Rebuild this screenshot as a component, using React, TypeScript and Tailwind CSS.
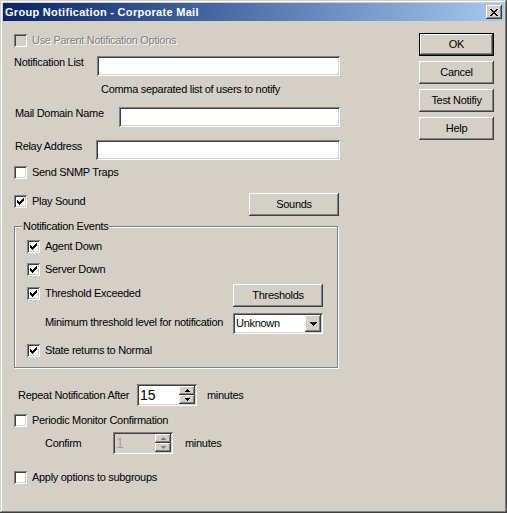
import React from "react";

const raised =
  "shadow-[inset_-1px_-1px_0_#404040,inset_1px_1px_0_#ffffff,inset_-2px_-2px_0_#808080,inset_2px_2px_0_#d4d0c8]";
const sunken =
  "shadow-[inset_1px_1px_0_#808080,inset_-1px_-1px_0_#ffffff,inset_2px_2px_0_#404040,inset_-2px_-2px_0_#d4d0c8]";
const disabledText = "text-[#808080] [text-shadow:1px_1px_0_#ffffff]";

function CheckMark() {
  return (
    <svg width="7" height="7" viewBox="0 0 7 7" shapeRendering="crispEdges">
      <path
        d="M0 2h1v3H0zM1 3h1v3H1zM2 4h1v3H2zM3 3h1v3H3zM4 2h1v3H4zM5 1h1v3H5zM6 0h1v3H6z"
        fill="#000"
      />
    </svg>
  );
}

function CheckBox({ checked, disabled }: { checked?: boolean; disabled?: boolean }) {
  return (
    <div
      className={`w-[13px] h-[13px] shrink-0 flex items-center justify-center ${sunken} ${
        disabled ? "bg-[#d4d0c8]" : "bg-white"
      }`}
    >
      {checked ? <CheckMark /> : null}
    </div>
  );
}

function CheckRow({
  label,
  checked,
  disabled,
  className = "",
}: {
  label: string;
  checked?: boolean;
  disabled?: boolean;
  className?: string;
}) {
  return (
    <div className={`flex items-center h-[13px] gap-[5px] ${className}`}>
      <CheckBox checked={checked} disabled={disabled} />
      <span className={`leading-[13px] whitespace-nowrap ${disabled ? disabledText : ""}`}>{label}</span>
    </div>
  );
}

function Button({
  label,
  isDefault,
  className = "",
}: {
  label: string;
  isDefault?: boolean;
  className?: string;
}) {
  return (
    <div
      className={`h-[23px] flex items-center justify-center bg-[#d4d0c8] leading-[13px] ${raised} ${
        isDefault ? "border border-black" : ""
      } ${className}`}
    >
      {label}
    </div>
  );
}

function TextBox({ className = "" }: { className?: string }) {
  return <div className={`h-[20px] bg-white ${sunken} ${className}`} />;
}

function UpArrow({ color }: { color: string }) {
  return (
    <svg width="5" height="3" viewBox="0 0 5 3" shapeRendering="crispEdges">
      <path d="M2 0h1v1H2zM1 1h3v1H1zM0 2h5v1H0z" fill={color} />
    </svg>
  );
}

function DownArrow({ color }: { color: string }) {
  return (
    <svg width="5" height="3" viewBox="0 0 5 3" shapeRendering="crispEdges">
      <path d="M0 0h5v1H0zM1 1h3v1H1zM2 2h1v1H2z" fill={color} />
    </svg>
  );
}

function Spin({ value, disabled }: { value: string; disabled?: boolean }) {
  const c = disabled ? "#808080" : "#000000";
  return (
    <div
      className={`w-[60px] h-[22px] p-[2px] flex ${sunken} ${disabled ? "bg-[#d4d0c8]" : "bg-white"}`}
    >
      <div
        className={`flex-1 pl-[1px] flex items-center text-[14px] leading-[16px] tracking-normal ${
          disabled ? "text-[#a0a0a0]" : "text-black"
        }`}
      >
        {value}
      </div>
      <div className="w-[16px] flex flex-col">
        <div className={`h-[9px] flex items-center justify-center bg-[#d4d0c8] ${raised}`}>
          <UpArrow color={c} />
        </div>
        <div className={`h-[9px] flex items-center justify-center bg-[#d4d0c8] ${raised}`}>
          <DownArrow color={c} />
        </div>
      </div>
    </div>
  );
}

function Combo({ value }: { value: string }) {
  return (
    <div className={`w-[90px] h-[21px] p-[2px] flex bg-white ${sunken}`}>
      <div className="flex-1 pl-[1px] flex items-center leading-[13px]">{value}</div>
      <div className={`w-[16px] h-[17px] flex items-center justify-center bg-[#d4d0c8] ${raised}`}>
        <svg width="7" height="4" viewBox="0 0 7 4" shapeRendering="crispEdges">
          <path d="M0 0h7v1H0zM1 1h5v1H1zM2 2h3v1H2zM3 3h1v1H3z" fill="#000" />
        </svg>
      </div>
    </div>
  );
}

export default function App() {
  return (
    <div
      className={`w-[507px] h-[513px] bg-[#d4d0c8] p-[3px] flex flex-col text-[11px] tracking-[-0.3px] text-black [font-family:'Liberation_Sans',Arial,sans-serif] shadow-[inset_-1px_-1px_0_#404040,inset_1px_1px_0_#d4d0c8,inset_-2px_-2px_0_#808080,inset_2px_2px_0_#ffffff]`}
    >
      {/* Title bar */}
      <div className="h-[18px] shrink-0 flex items-center pl-[2px] pr-[2px] bg-gradient-to-r from-[#0a246a] to-[#a6caf0]">
        <span className="text-white font-bold leading-[13px] tracking-[0.3px] whitespace-nowrap">
          Group Notification - Corporate Mail
        </span>
        <div className={`ml-auto w-[16px] h-[14px] flex items-center justify-center bg-[#d4d0c8] ${raised}`}>
          <svg width="8" height="7" viewBox="0 0 8 7" shapeRendering="crispEdges">
            <path
              d="M0 0h2v1H0zM6 0h2v1H6zM1 1h2v1H1zM5 1h2v1H5zM2 2h4v1H2zM3 3h2v1H3zM2 4h4v1H2zM1 5h2v1H1zM5 5h2v1H5zM0 6h2v1H0zM6 6h2v1H6z"
              fill="#000"
            />
          </svg>
        </div>
      </div>

      {/* Body */}
      <div className="flex flex-row flex-1">
        {/* Left column */}
        <div className="ml-[11px] w-[326px] flex flex-col pt-[13px]">
          <CheckRow label="Use Parent Notification Options" disabled />

          <div className="mt-[9px] flex items-start">
            <span className="w-[83px] leading-[13px] whitespace-nowrap">Notification List</span>
            <TextBox className="flex-1" />
          </div>

          <div className="mt-[7px] pl-[87px] leading-[13px] whitespace-nowrap">
            Comma separated list of users to notify
          </div>

          <div className="mt-[11px] flex items-start pl-[1px]">
            <span className="w-[104px] leading-[13px] whitespace-nowrap">Mail Domain Name</span>
            <TextBox className="flex-1" />
          </div>

          <div className="mt-[13px] flex items-start pl-[1px]">
            <span className="w-[81px] leading-[13px] whitespace-nowrap">Relay Address</span>
            <TextBox className="flex-1" />
          </div>

          <CheckRow label="Send SNMP Traps" className="mt-[6px]" />

          <div className="mt-[14px] h-[23px] flex items-start">
            <CheckRow label="Play Sound" checked className="mt-[2px]" />
            <Button label="Sounds" className="ml-auto w-[90px] mr-[1px]" />
          </div>

          {/* Group box */}
          <div className="relative mt-[10px] w-[324px] h-[142px] border border-[#808080] shadow-[inset_1px_1px_0_#ffffff,1px_1px_0_#ffffff] pt-[13px] pl-[12px] pr-[14px] flex flex-col">
            <span className="absolute left-[7px] top-[-7px] px-[1px] bg-[#d4d0c8] leading-[13px] whitespace-nowrap">
              Notification Events
            </span>
            <CheckRow label="Agent Down" checked />
            <CheckRow label="Server Down" checked className="mt-[10px]" />
            <div className="mt-[8px] h-[23px] flex items-start">
              <CheckRow label="Threshold Exceeded" checked className="mt-[3px]" />
              <Button label="Thresholds" className="ml-auto w-[90px]" />
            </div>
            <div className="mt-[6px] h-[21px] flex items-start">
              <span className="ml-[18px] mt-[3px] leading-[13px] whitespace-nowrap">
                Minimum threshold level for notification
              </span>
              <div className="ml-auto">
                <Combo value="Unknown" />
              </div>
            </div>
            <CheckRow label="State returns to Normal" checked className="mt-[10px]" />
          </div>

          <div className="mt-[16px] h-[22px] flex items-center pl-[4px]">
            <span className="w-[119px] leading-[13px] whitespace-nowrap">Repeat Notification After</span>
            <Spin value="15" />
            <span className="ml-[10px] leading-[13px]">minutes</span>
          </div>

          <CheckRow label="Periodic Monitor Confirmation" className="mt-[8px]" />

          <div className="mt-[5px] h-[22px] flex items-center pl-[31px]">
            <span className="w-[68px] leading-[13px]">Confirm</span>
            <Spin value="1" disabled />
            <span className="ml-[12px] leading-[13px]">minutes</span>
          </div>

          <CheckRow label="Apply options to subgroups" className="mt-[17px]" />
        </div>

        {/* Right column */}
        <div className="ml-[79px] w-[75px] flex flex-col pt-[12px] gap-[5px]">
          <Button label="OK" isDefault />
          <Button label="Cancel" />
          <Button label="Test Notifiy" />
          <Button label="Help" />
        </div>
      </div>
    </div>
  );
}
